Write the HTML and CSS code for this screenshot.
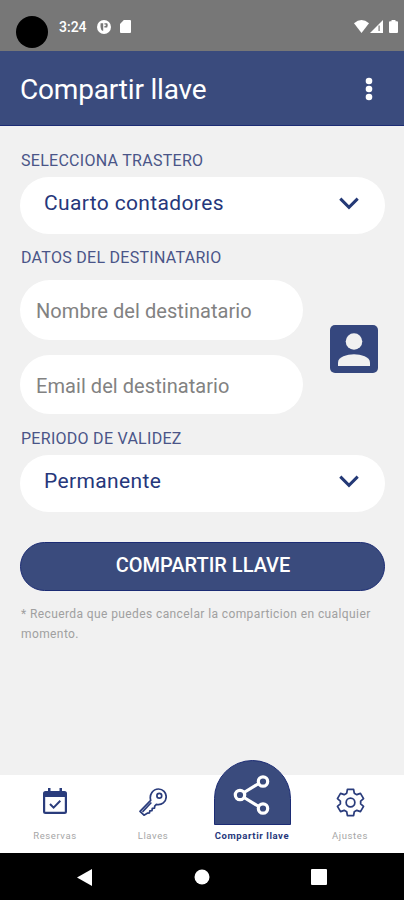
FILE: index.html
```html
<!DOCTYPE html>
<html lang="es">
<head>
<meta charset="utf-8">
<title>Compartir llave</title>
<link rel="stylesheet" href="styles.css">
</head>
<body>
<div class="phone">
  <div class="status">
    <span class="camera"></span>
    <span class="time">3:24</span>
    <svg class="st-app" viewBox="0 0 14 14"><circle cx="7" cy="7" r="7" fill="#fff"/><path d="M3.600 3.200h2.600v7.600H5.400Q3 9.500 3.600 3.200zM7.400 3.200h2.800q1.400 2 0 4.200H7.400z" fill="#777"/><path d="M7 4.600h1.700v1.400H7z" fill="#fff"/></svg>
    <svg class="st-sd" viewBox="0 0 11 13"><path d="M3.8 0H10q1 0 1 1v11q0 1-1 1H1q-1 0-1-1V4z" fill="#fff"/></svg>
    <span class="spacer"></span>
    <svg class="st-wifi" viewBox="0 0 15 13"><path d="M0 3.2Q7.500-3 15 3.200L7.500 13z" fill="#fff"/></svg>
    <svg class="st-cell" viewBox="0 0 13 13"><path d="M0 13 13 0v13z" fill="#fff"/><path d="M8.500 5.500h1.200v5.500H8.500z" fill="#777"/></svg>
    <svg class="st-bat" viewBox="0 0 9 13"><path d="M2.500 0h4v1.200H8q1 0 1 1V12q0 1-1 1H1q-1 0-1-1V2.200q0-1 1-1h1.500z" fill="#fff"/></svg>
  </div>
  <header class="appbar">
    <h1>Compartir llave</h1>
    <svg class="more" viewBox="0 0 8 24"><g fill="#fff"><circle cx="4" cy="4" r="3.300"/><circle cx="4" cy="12" r="3.300"/><circle cx="4" cy="20" r="3.300"/></g></svg>
  </header>
  <main>
    <h2 class="lbl-1">SELECCIONA TRASTERO</h2>
    <div class="select"><span>Cuarto contadores</span><svg viewBox="0 0 20 13"><path d="M1.300 1.600 10 10.300l8.700-8.700" /></svg></div>
    <h2 class="lbl-2">DATOS DEL DESTINATARIO</h2>
    <div class="recipient">
      <div class="fields">
        <div class="field"><span>Nombre del destinatario</span></div>
        <div class="field mail"><span>Email del destinatario</span></div>
      </div>
      <svg class="contact" viewBox="0 0 48 48"><rect width="48" height="48" rx="5" fill="#35477e"/><circle cx="24" cy="16.500" r="8.300" fill="#f1f1f1"/><path d="M8 41v-3.500C8 32 17 29.300 24 29.300S40 32 40 37.500V41z" fill="#f1f1f1"/></svg>
    </div>
    <h2 class="lbl-3">PERIODO DE VALIDEZ</h2>
    <div class="select"><span>Permanente</span><svg viewBox="0 0 20 13"><path d="M1.300 1.600 10 10.300l8.700-8.700" /></svg></div>
    <div class="button"><span>COMPARTIR LLAVE</span></div>
    <p class="note">* Recuerda que puedes cancelar la comparticion en cualquier<br>momento.</p>
  </main>
  <nav class="tabs">
    <div class="tab reservas">
      <svg viewBox="0 0 24 26"><path d="M5 0h2.500v3h9V0H19v3h2.500Q24 3 24 5.500v18Q24 26 21.500 26h-19Q0 26 0 23.500v-18Q0 3 2.500 3H5zM2.200 9v14.800h19.600V9z" fill="#2a3c7c" fill-rule="evenodd"/><path d="m7 16 3.600 3.600 6.700-6.800" fill="none" stroke="#2a3c7c" stroke-width="2"/></svg>
      <span>Reservas</span>
    </div>
    <div class="tab llaves">
      <svg viewBox="0 0 28 28"><g fill="none" stroke="#2a3c7c" stroke-width="1.700" stroke-linejoin="round"><path d="M11.700 12.400C10 6.500 14 1 19.500 1c4.500 0 7.700 3.500 7.700 7.800 0 5.200-4.400 8.600-9.800 7.600l-1.700 1.800-.2 2-2.200.2-.3 2.200-2.200.2-.3 2.100-1.800.2L5 27.200 1 23.300z"/><path d="m12.300 14.500-8.800 9.300"/><circle cx="20.300" cy="7.700" r="2.400"/></g></svg>
      <span>Llaves</span>
    </div>
    <div class="tab share">
      <div class="dome"><svg viewBox="0 0 38 40"><g fill="none" stroke="#fff" stroke-width="3.200"><path d="M11 17.500 25 9M11 22.500 25 31"/><circle cx="7" cy="20" r="4.700"/><circle cx="30" cy="6.500" r="4.700"/><circle cx="30" cy="33.500" r="4.700"/></g></svg></div>
      <span>Compartir llave</span>
    </div>
    <div class="tab ajustes">
      <svg viewBox="0 0 30 30"><g fill="none" stroke="#2a3c7c" stroke-width="1.800" stroke-linejoin="round"><path d="M11.800 1.500h6.400l.7 3.900 2.600 1.500 3.800-1.400 3.200 5.500-3 2.500v3l3 2.500-3.200 5.500-3.800-1.400-2.600 1.500-.7 3.900h-6.400l-.7-3.900-2.600-1.500-3.800 1.400L1.500 19l3-2.500v-3l-3-2.500 3.200-5.500 3.800 1.400 2.600-1.500z"/><circle cx="15" cy="15" r="4.500"/></g></svg>
      <span>Ajustes</span>
    </div>
  </nav>
  <div class="sysnav">
    <svg class="back" viewBox="0 0 15 17"><path d="M15 0v17L0 8.500z" fill="#fff"/></svg>
    <svg class="home" viewBox="0 0 16 16"><circle cx="8" cy="8" r="7.500" fill="#fff"/></svg>
    <svg class="recent" viewBox="0 0 16 16"><rect width="16" height="16" rx="1" fill="#fff"/></svg>
  </div>
</div>
</body>
</html>
```
FILE: styles.css
```css
* { box-sizing: border-box; margin: 0; padding: 0; }
body { font-family: Roboto, "Liberation Sans", sans-serif; background: #f1f1f1; }
svg { display: block; flex: none; }
.phone { width: 404px; height: 900px; display: flex; flex-direction: column; overflow: hidden; }
.status { height: 51px; flex: none; background: #777; display: flex; align-items: center; padding: 2px 6px 0 16px; }
.camera { width: 32px; height: 32px; border-radius: 50%; background: #000; margin-top: 11px; }
.time { color: #fff; font-size: 14px; font-weight: 500; line-height: 16px; width: 28px; margin-left: 11px; white-space: nowrap; }
.st-app { width: 14px; height: 14px; margin-left: 10px; }
.st-sd { width: 11px; height: 13px; margin-left: 9px; }
.spacer { flex: 1; }
.st-wifi { width: 15px; height: 13px; }
.st-cell { width: 13px; height: 13px; margin-left: 1px; }
.st-bat { width: 9px; height: 13px; margin-left: 6px; }
.appbar { height: 75px; flex: none; background: #3a4b7d; border-bottom: 1px solid #1c2c74; display: flex; align-items: center; justify-content: space-between; padding: 2px 31px 0 20px; color: #fff; }
.appbar h1 { font-size: 28px; font-weight: 400; line-height: 34px; letter-spacing: -.18px; white-space: nowrap; padding-top: 2px; }
.more { width: 8px; height: 24px; }
main { flex: 1; padding: 25px 19px 0 20px; }
h2 { font-size: 16px; line-height: 20px; font-weight: 400; color: #4a5588; padding-left: 1px; letter-spacing: .28px; white-space: nowrap; }
.select { height: 57px; margin-top: 6px; background: #fff; border-radius: 29px; display: flex; align-items: center; justify-content: space-between; padding: 0 26px 5px 24px; color: #26377b; font-size: 21px; letter-spacing: .36px; }
.select svg { width: 20px; height: 13px; fill: none; stroke: #243976; stroke-width: 3px; }
.lbl-2 { margin-top: 14px; }
.recipient { display: flex; justify-content: space-between; align-items: center; margin-top: 12px; padding-right: 7px; }
.fields { width: 283px; }
.field { height: 60px; background: #fff; border-radius: 30px; display: flex; align-items: center; padding: 2px 16px 0; font-size: 20px; color: #828282; letter-spacing: .06px; white-space: nowrap; }
.mail { margin-top: 15px; height: 59px; }
.contact { width: 48px; height: 48px; margin-top: 4px; }
.lbl-3 { margin-top: 15px; }
.button { height: 49px; margin-top: 30px; border-radius: 25px; background: #3a4b7d; border: 1px solid #1c2c74; display: flex; align-items: center; justify-content: center; padding: 0 0 4px 1px; color: #fff; font-size: 20px; font-weight: 500; }
.note { margin-top: 13px; padding-left: 1px; font-size: 12px; line-height: 20px; color: #a0a0a0; letter-spacing: .4px; white-space: nowrap; }
.tabs { height: 78px; flex: none; background: #fff; display: grid; grid-template-columns: 105px 96px 102px 101px; grid-template-rows: 78px; }
.tab { min-height: 0; display: flex; flex-direction: column; align-items: center; justify-content: flex-end; padding-bottom: 11px; font-size: 9.5px; line-height: 12px; color: #a6a6a6; letter-spacing: .6px; white-space: nowrap; }
.tab svg { margin-bottom: 14px; }
.reservas { padding-left: 5px; }
.reservas svg { width: 24px; height: 26px; margin-bottom: 16px; }
.llaves svg { width: 28px; height: 28px; }
.ajustes { padding-right: 7px; }
.ajustes svg { width: 29px; height: 29px; margin-bottom: 13px; }
.share { color: #26377b; font-weight: 700; }
.dome { width: 77px; height: 65px; flex: none; margin-bottom: 5px; border-radius: 38.5px 38.5px 0 0; background: #3a4b7d; border: 1px solid #1c2c74; display: flex; justify-content: center; padding-top: 14px; }
.dome svg { width: 38px; height: 40px; margin: 0; }
.sysnav { height: 47px; flex: none; background: #000; display: flex; align-items: center; padding: 1px 0 0 77px; }
.back { width: 15px; height: 17px; }
.home { width: 16px; height: 16px; margin-left: 102px; }
.recent { width: 16px; height: 16px; margin-left: 101px; }
```
